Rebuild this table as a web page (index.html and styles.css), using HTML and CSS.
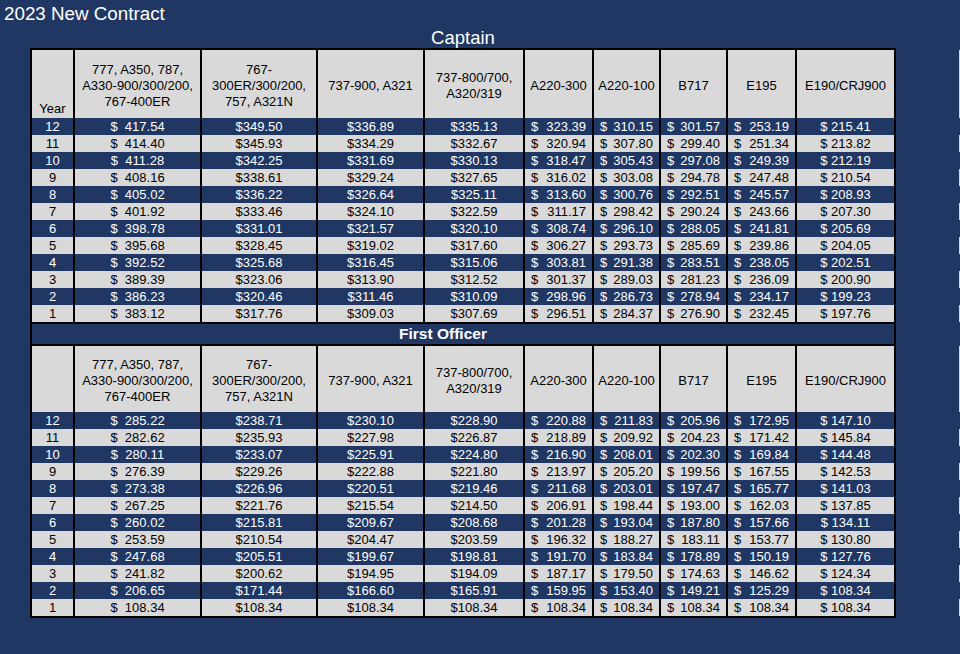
FILE: index.html
```html
<!DOCTYPE html>
<html>
<head>
<meta charset="utf-8">
<link rel="stylesheet" href="styles.css">
</head>
<body>
<div class="title">2023 New Contract</div>
<div class="caption">Captain</div>
<div class="sheet">
  <div class="row head">
    <div class="year">Year</div>
    <div>777, A350, 787,<br>A330-900/300/200,<br>767-400ER</div>
    <div>767-<br>300ER/300/200,<br>757, A321N</div>
    <div>737-900, A321</div>
    <div>737-800/700,<br>A320/319</div>
    <div>A220-300</div>
    <div>A220-100</div>
    <div>B717</div>
    <div>E195</div>
    <div>E190/CRJ900</div>
  </div>
  <div class="row"><div>12</div><div>$&nbsp;&nbsp;417.54</div><div>$349.50</div><div>$336.89</div><div>$335.13</div><div class="acc"><span>$</span><span>323.39</span></div><div class="acc"><span>$</span><span>310.15</span></div><div class="acc"><span>$</span><span>301.57</span></div><div class="acc"><span>$</span><span>253.19</span></div><div>$ 215.41</div></div>
  <div class="row light"><div>11</div><div>$&nbsp;&nbsp;414.40</div><div>$345.93</div><div>$334.29</div><div>$332.67</div><div class="acc"><span>$</span><span>320.94</span></div><div class="acc"><span>$</span><span>307.80</span></div><div class="acc"><span>$</span><span>299.40</span></div><div class="acc"><span>$</span><span>251.34</span></div><div>$ 213.82</div></div>
  <div class="row"><div>10</div><div>$&nbsp;&nbsp;411.28</div><div>$342.25</div><div>$331.69</div><div>$330.13</div><div class="acc"><span>$</span><span>318.47</span></div><div class="acc"><span>$</span><span>305.43</span></div><div class="acc"><span>$</span><span>297.08</span></div><div class="acc"><span>$</span><span>249.39</span></div><div>$ 212.19</div></div>
  <div class="row light"><div>9</div><div>$&nbsp;&nbsp;408.16</div><div>$338.61</div><div>$329.24</div><div>$327.65</div><div class="acc"><span>$</span><span>316.02</span></div><div class="acc"><span>$</span><span>303.08</span></div><div class="acc"><span>$</span><span>294.78</span></div><div class="acc"><span>$</span><span>247.48</span></div><div>$ 210.54</div></div>
  <div class="row"><div>8</div><div>$&nbsp;&nbsp;405.02</div><div>$336.22</div><div>$326.64</div><div>$325.11</div><div class="acc"><span>$</span><span>313.60</span></div><div class="acc"><span>$</span><span>300.76</span></div><div class="acc"><span>$</span><span>292.51</span></div><div class="acc"><span>$</span><span>245.57</span></div><div>$ 208.93</div></div>
  <div class="row light"><div>7</div><div>$&nbsp;&nbsp;401.92</div><div>$333.46</div><div>$324.10</div><div>$322.59</div><div class="acc"><span>$</span><span>311.17</span></div><div class="acc"><span>$</span><span>298.42</span></div><div class="acc"><span>$</span><span>290.24</span></div><div class="acc"><span>$</span><span>243.66</span></div><div>$ 207.30</div></div>
  <div class="row"><div>6</div><div>$&nbsp;&nbsp;398.78</div><div>$331.01</div><div>$321.57</div><div>$320.10</div><div class="acc"><span>$</span><span>308.74</span></div><div class="acc"><span>$</span><span>296.10</span></div><div class="acc"><span>$</span><span>288.05</span></div><div class="acc"><span>$</span><span>241.81</span></div><div>$ 205.69</div></div>
  <div class="row light"><div>5</div><div>$&nbsp;&nbsp;395.68</div><div>$328.45</div><div>$319.02</div><div>$317.60</div><div class="acc"><span>$</span><span>306.27</span></div><div class="acc"><span>$</span><span>293.73</span></div><div class="acc"><span>$</span><span>285.69</span></div><div class="acc"><span>$</span><span>239.86</span></div><div>$ 204.05</div></div>
  <div class="row"><div>4</div><div>$&nbsp;&nbsp;392.52</div><div>$325.68</div><div>$316.45</div><div>$315.06</div><div class="acc"><span>$</span><span>303.81</span></div><div class="acc"><span>$</span><span>291.38</span></div><div class="acc"><span>$</span><span>283.51</span></div><div class="acc"><span>$</span><span>238.05</span></div><div>$ 202.51</div></div>
  <div class="row light"><div>3</div><div>$&nbsp;&nbsp;389.39</div><div>$323.06</div><div>$313.90</div><div>$312.52</div><div class="acc"><span>$</span><span>301.37</span></div><div class="acc"><span>$</span><span>289.03</span></div><div class="acc"><span>$</span><span>281.23</span></div><div class="acc"><span>$</span><span>236.09</span></div><div>$ 200.90</div></div>
  <div class="row"><div>2</div><div>$&nbsp;&nbsp;386.23</div><div>$320.46</div><div>$311.46</div><div>$310.09</div><div class="acc"><span>$</span><span>298.96</span></div><div class="acc"><span>$</span><span>286.73</span></div><div class="acc"><span>$</span><span>278.94</span></div><div class="acc"><span>$</span><span>234.17</span></div><div>$ 199.23</div></div>
  <div class="row light"><div>1</div><div>$&nbsp;&nbsp;383.12</div><div>$317.76</div><div>$309.03</div><div>$307.69</div><div class="acc"><span>$</span><span>296.51</span></div><div class="acc"><span>$</span><span>284.37</span></div><div class="acc"><span>$</span><span>276.90</span></div><div class="acc"><span>$</span><span>232.45</span></div><div>$ 197.76</div></div>

  <div class="fo-title">First Officer</div>

  <div class="row head fo">
    <div class="year"></div>
    <div>777, A350, 787,<br>A330-900/300/200,<br>767-400ER</div>
    <div>767-<br>300ER/300/200,<br>757, A321N</div>
    <div>737-900, A321</div>
    <div>737-800/700,<br>A320/319</div>
    <div>A220-300</div>
    <div>A220-100</div>
    <div>B717</div>
    <div>E195</div>
    <div>E190/CRJ900</div>
  </div>
  <div class="row"><div>12</div><div>$&nbsp;&nbsp;285.22</div><div>$238.71</div><div>$230.10</div><div>$228.90</div><div class="acc"><span>$</span><span>220.88</span></div><div class="acc"><span>$</span><span>211.83</span></div><div class="acc"><span>$</span><span>205.96</span></div><div class="acc"><span>$</span><span>172.95</span></div><div>$ 147.10</div></div>
  <div class="row light"><div>11</div><div>$&nbsp;&nbsp;282.62</div><div>$235.93</div><div>$227.98</div><div>$226.87</div><div class="acc"><span>$</span><span>218.89</span></div><div class="acc"><span>$</span><span>209.92</span></div><div class="acc"><span>$</span><span>204.23</span></div><div class="acc"><span>$</span><span>171.42</span></div><div>$ 145.84</div></div>
  <div class="row"><div>10</div><div>$&nbsp;&nbsp;280.11</div><div>$233.07</div><div>$225.91</div><div>$224.80</div><div class="acc"><span>$</span><span>216.90</span></div><div class="acc"><span>$</span><span>208.01</span></div><div class="acc"><span>$</span><span>202.30</span></div><div class="acc"><span>$</span><span>169.84</span></div><div>$ 144.48</div></div>
  <div class="row light"><div>9</div><div>$&nbsp;&nbsp;276.39</div><div>$229.26</div><div>$222.88</div><div>$221.80</div><div class="acc"><span>$</span><span>213.97</span></div><div class="acc"><span>$</span><span>205.20</span></div><div class="acc"><span>$</span><span>199.56</span></div><div class="acc"><span>$</span><span>167.55</span></div><div>$ 142.53</div></div>
  <div class="row"><div>8</div><div>$&nbsp;&nbsp;273.38</div><div>$226.96</div><div>$220.51</div><div>$219.46</div><div class="acc"><span>$</span><span>211.68</span></div><div class="acc"><span>$</span><span>203.01</span></div><div class="acc"><span>$</span><span>197.47</span></div><div class="acc"><span>$</span><span>165.77</span></div><div>$ 141.03</div></div>
  <div class="row light"><div>7</div><div>$&nbsp;&nbsp;267.25</div><div>$221.76</div><div>$215.54</div><div>$214.50</div><div class="acc"><span>$</span><span>206.91</span></div><div class="acc"><span>$</span><span>198.44</span></div><div class="acc"><span>$</span><span>193.00</span></div><div class="acc"><span>$</span><span>162.03</span></div><div>$ 137.85</div></div>
  <div class="row"><div>6</div><div>$&nbsp;&nbsp;260.02</div><div>$215.81</div><div>$209.67</div><div>$208.68</div><div class="acc"><span>$</span><span>201.28</span></div><div class="acc"><span>$</span><span>193.04</span></div><div class="acc"><span>$</span><span>187.80</span></div><div class="acc"><span>$</span><span>157.66</span></div><div>$ 134.11</div></div>
  <div class="row light"><div>5</div><div>$&nbsp;&nbsp;253.59</div><div>$210.54</div><div>$204.47</div><div>$203.59</div><div class="acc"><span>$</span><span>196.32</span></div><div class="acc"><span>$</span><span>188.27</span></div><div class="acc"><span>$</span><span>183.11</span></div><div class="acc"><span>$</span><span>153.77</span></div><div>$ 130.80</div></div>
  <div class="row"><div>4</div><div>$&nbsp;&nbsp;247.68</div><div>$205.51</div><div>$199.67</div><div>$198.81</div><div class="acc"><span>$</span><span>191.70</span></div><div class="acc"><span>$</span><span>183.84</span></div><div class="acc"><span>$</span><span>178.89</span></div><div class="acc"><span>$</span><span>150.19</span></div><div>$ 127.76</div></div>
  <div class="row light"><div>3</div><div>$&nbsp;&nbsp;241.82</div><div>$200.62</div><div>$194.95</div><div>$194.09</div><div class="acc"><span>$</span><span>187.17</span></div><div class="acc"><span>$</span><span>179.50</span></div><div class="acc"><span>$</span><span>174.63</span></div><div class="acc"><span>$</span><span>146.62</span></div><div>$ 124.34</div></div>
  <div class="row"><div>2</div><div>$&nbsp;&nbsp;206.65</div><div>$171.44</div><div>$166.60</div><div>$165.91</div><div class="acc"><span>$</span><span>159.95</span></div><div class="acc"><span>$</span><span>153.40</span></div><div class="acc"><span>$</span><span>149.21</span></div><div class="acc"><span>$</span><span>125.29</span></div><div>$ 108.34</div></div>
  <div class="row light"><div>1</div><div>$&nbsp;&nbsp;108.34</div><div>$108.34</div><div>$108.34</div><div>$108.34</div><div class="acc"><span>$</span><span>108.34</span></div><div class="acc"><span>$</span><span>108.34</span></div><div class="acc"><span>$</span><span>108.34</span></div><div class="acc"><span>$</span><span>108.34</span></div><div>$ 108.34</div></div>
</div>
</body>
</html>
```

FILE: styles.css
```css
* { box-sizing: border-box; }
html, body { margin: 0; padding: 0; }
body {
  background: #203764;
  color: #fff;
  font-family: "Liberation Sans", Arial, sans-serif;
  width: 960px;
  height: 654px;
  overflow: hidden;
}
.title {
  font-size: 18.8px;
  line-height: 21px;
  height: 24px;
  padding: 3px 0 0 4px;
}
.caption {
  font-size: 18.5px;
  line-height: 21px;
  height: 21px;
  margin: 3px 0 0 30px;
  width: 866px;
  text-align: center;
}
.sheet {
  margin-left: 30px;
  width: 866px;
  border: 2px solid #000;
  font-size: 13px;
}
.row {
  display: grid;
  grid-template-columns: 43px 127px 116px 107px 100px 69px 67px 67px 69px 97px;
  height: 17px;
  line-height: 17px;
}
.row > div {
  border-right: 2px solid #000;
  text-align: center;
  white-space: nowrap;
}
.row > div:last-child { border-right: 0; }
.light {
  background: #d9d9d9;
  color: #000;
  box-shadow: 927px 0 0 #d9d9d9;
}
.head {
  height: 68px;
  line-height: 16px;
  background: #d9d9d9;
  color: #000;
  box-shadow: 927px 0 0 #d9d9d9;
}
.head > div {
  display: flex;
  align-items: center;
  justify-content: center;
  padding-top: 3px;
}
.head > .year {
  align-items: flex-end;
  padding: 0 0 1px;
}
.head.fo { height: 66px; }
.acc {
  display: flex;
  justify-content: space-between;
  padding: 0 6px;
}
.fo-title {
  border-top: 2px solid #000;
  border-bottom: 2px solid #000;
  height: 24px;
  line-height: 20px;
  font-size: 15.5px;
  font-weight: bold;
  text-align: center;
  padding-right: 40px;
}
```
